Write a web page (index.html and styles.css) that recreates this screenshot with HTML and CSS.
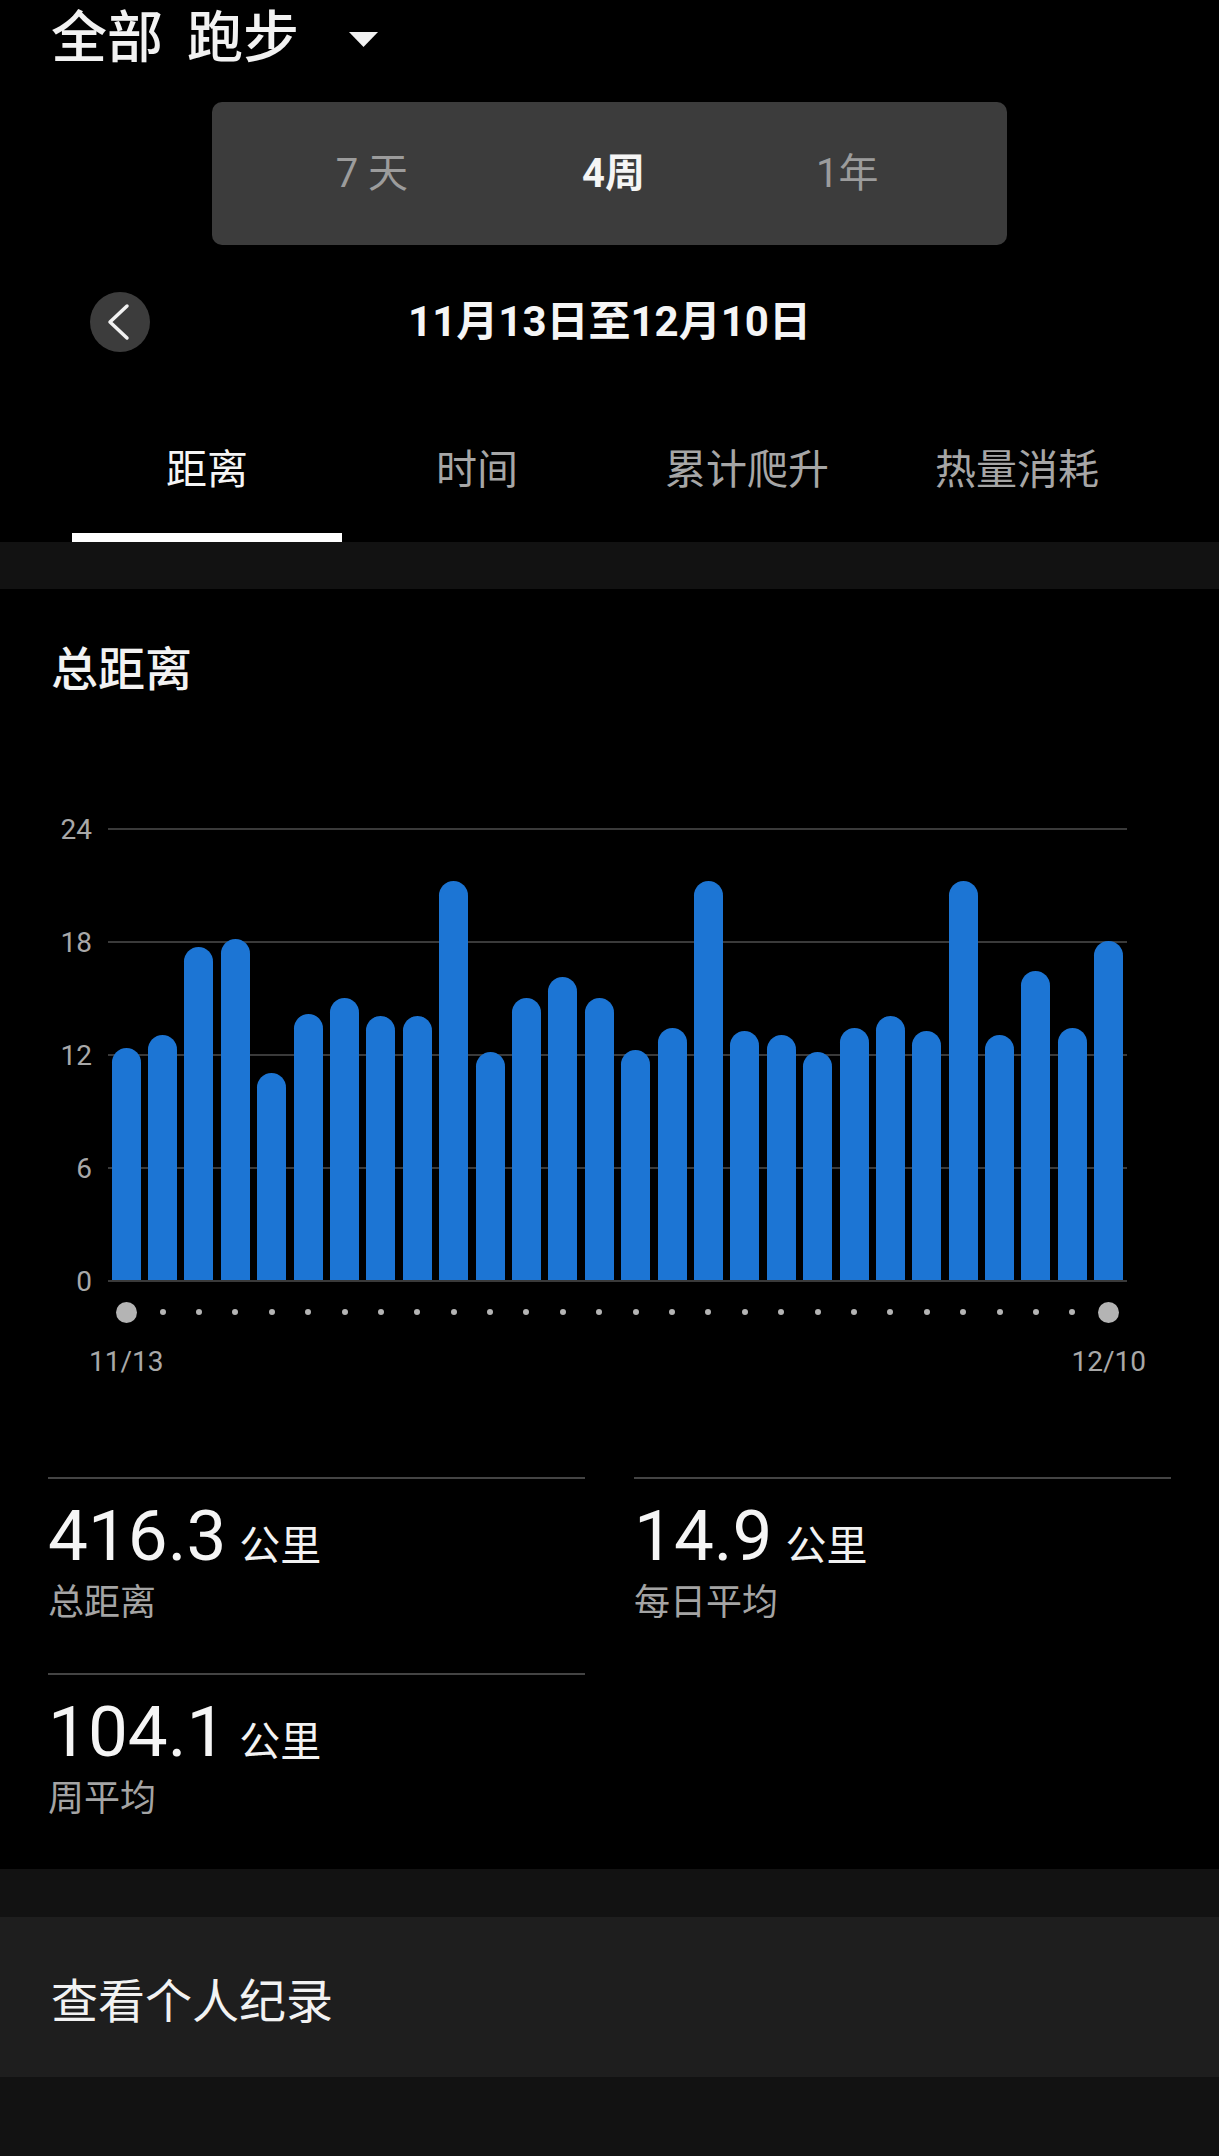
FILE: index.html
```html
<!DOCTYPE html>
<html lang="zh-CN">
<head>
<meta charset="utf-8">
<title>全部 跑步</title>
<link rel="stylesheet" href="styles.css">
</head>
<body>
<div class="page">
  <header class="title-row">
    <span class="title">全部 跑步</span>
    <svg class="caret" width="29" height="15" viewBox="0 0 29 15"><polygon points="0,0 29,0 14.5,15" fill="#f2f2f2"/></svg>
  </header>

  <div class="segment">
    <div class="seg-item">7 天</div>
    <div class="seg-item active">4周</div>
    <div class="seg-item">1年</div>
  </div>

  <div class="date-row">
    <div class="date-left">
      <div class="back">
        <svg width="60" height="60" viewBox="0 0 60 60"><polyline points="37,14 20,30 37,46" fill="none" stroke="#f2f2f2" stroke-width="3.5" stroke-linecap="round" stroke-linejoin="round"/></svg>
      </div>
    </div>
    <div class="date-text">11月13日至12月10日</div>
    <div></div>
  </div>

  <nav class="tabs">
    <div class="tab active">距离</div>
    <div class="tab">时间</div>
    <div class="tab">累计爬升</div>
    <div class="tab">热量消耗</div>
  </nav>

  <div class="band"></div>

  <section class="card">
    <h2 class="card-title">总距离</h2>
    <div class="chart">
      <div class="yaxis">
        <span>24</span><span>18</span><span>12</span><span>6</span><span>0</span>
      </div>
      <div class="plot">
        <div class="bars">
          <div class="slot"><div class="bar" style="height:51.25%"></div></div>
          <div class="slot"><div class="bar" style="height:54.17%"></div></div>
          <div class="slot"><div class="bar" style="height:73.75%"></div></div>
          <div class="slot"><div class="bar" style="height:75.42%"></div></div>
          <div class="slot"><div class="bar" style="height:45.83%"></div></div>
          <div class="slot"><div class="bar" style="height:58.75%"></div></div>
          <div class="slot"><div class="bar" style="height:62.5%"></div></div>
          <div class="slot"><div class="bar" style="height:58.33%"></div></div>
          <div class="slot"><div class="bar" style="height:58.33%"></div></div>
          <div class="slot"><div class="bar" style="height:88.33%"></div></div>
          <div class="slot"><div class="bar" style="height:50.42%"></div></div>
          <div class="slot"><div class="bar" style="height:62.5%"></div></div>
          <div class="slot"><div class="bar" style="height:67.08%"></div></div>
          <div class="slot"><div class="bar" style="height:62.5%"></div></div>
          <div class="slot"><div class="bar" style="height:50.83%"></div></div>
          <div class="slot"><div class="bar" style="height:55.83%"></div></div>
          <div class="slot"><div class="bar" style="height:88.33%"></div></div>
          <div class="slot"><div class="bar" style="height:55%"></div></div>
          <div class="slot"><div class="bar" style="height:54.17%"></div></div>
          <div class="slot"><div class="bar" style="height:50.42%"></div></div>
          <div class="slot"><div class="bar" style="height:55.83%"></div></div>
          <div class="slot"><div class="bar" style="height:58.33%"></div></div>
          <div class="slot"><div class="bar" style="height:55%"></div></div>
          <div class="slot"><div class="bar" style="height:88.33%"></div></div>
          <div class="slot"><div class="bar" style="height:54.17%"></div></div>
          <div class="slot"><div class="bar" style="height:68.33%"></div></div>
          <div class="slot"><div class="bar" style="height:55.83%"></div></div>
          <div class="slot"><div class="bar" style="height:75%"></div></div>
        </div>
      </div>
      <div class="dots">
        <div class="dslot"><span class="dot big"></span></div>
        <div class="dslot"><span class="dot"></span></div>
        <div class="dslot"><span class="dot"></span></div>
        <div class="dslot"><span class="dot"></span></div>
        <div class="dslot"><span class="dot"></span></div>
        <div class="dslot"><span class="dot"></span></div>
        <div class="dslot"><span class="dot"></span></div>
        <div class="dslot"><span class="dot"></span></div>
        <div class="dslot"><span class="dot"></span></div>
        <div class="dslot"><span class="dot"></span></div>
        <div class="dslot"><span class="dot"></span></div>
        <div class="dslot"><span class="dot"></span></div>
        <div class="dslot"><span class="dot"></span></div>
        <div class="dslot"><span class="dot"></span></div>
        <div class="dslot"><span class="dot"></span></div>
        <div class="dslot"><span class="dot"></span></div>
        <div class="dslot"><span class="dot"></span></div>
        <div class="dslot"><span class="dot"></span></div>
        <div class="dslot"><span class="dot"></span></div>
        <div class="dslot"><span class="dot"></span></div>
        <div class="dslot"><span class="dot"></span></div>
        <div class="dslot"><span class="dot"></span></div>
        <div class="dslot"><span class="dot"></span></div>
        <div class="dslot"><span class="dot"></span></div>
        <div class="dslot"><span class="dot"></span></div>
        <div class="dslot"><span class="dot"></span></div>
        <div class="dslot"><span class="dot"></span></div>
        <div class="dslot"><span class="dot big"></span></div>
      </div>
      <div class="xlabels">
        <div class="lslot"><span>11/13</span></div>
        <div class="lslot-fill"></div>
        <div class="lslot"><span>12/10</span></div>
      </div>
    </div>

    <div class="stats">
      <div class="stat">
        <div class="stat-value"><span class="num">416.3</span><span class="unit">公里</span></div>
        <div class="stat-label">总距离</div>
      </div>
      <div class="stat">
        <div class="stat-value"><span class="num">14.9</span><span class="unit">公里</span></div>
        <div class="stat-label">每日平均</div>
      </div>
      <div class="stat">
        <div class="stat-value"><span class="num">104.1</span><span class="unit">公里</span></div>
        <div class="stat-label">周平均</div>
      </div>
    </div>
  </section>

  <div class="band band-lg"></div>

  <div class="records">查看个人纪录</div>

  <div class="bottom-fill"></div>
</div>
</body>
</html>
```

FILE: styles.css
```css
html, body {
  margin: 0;
  padding: 0;
  background: #000;
}

body {
  font-family: "Roboto", "Noto Sans CJK SC", sans-serif;
  color: #f2f2f2;
}

.page {
  width: 1219px;
  min-height: 2156px;
  display: flex;
  flex-direction: column;
  background: #000;
}

/* Title */
.title-row {
  height: 72px;
  display: flex;
  align-items: center;
  padding-left: 51px;
}

.title {
  margin-top: 4px;
  font-size: 56px;
  line-height: 72px;
  font-weight: 500;
  word-spacing: 10px;
  white-space: nowrap;
  color: #f2f2f2;
}

.caret {
  margin-left: 50px;
  margin-top: 6px;
}

/* Segment control */
.segment {
  width: 795px;
  height: 143px;
  margin: 30px auto 0;
  box-sizing: border-box;
  padding: 0 41px;
  background: #3c3c3c;
  border-radius: 10px;
  display: grid;
  grid-template-columns: repeat(3, 1fr);
  align-items: center;
}

.seg-item {
  text-align: center;
  font-size: 40px;
  line-height: 46px;
  color: #9c9c9c;
}

.seg-item.active {
  color: #f5f5f5;
  font-weight: 700;
  padding-left: 8px;
}

/* Date row */
.date-row {
  margin-top: 47px;
  height: 60px;
  display: grid;
  grid-template-columns: 1fr auto 1fr;
  align-items: center;
}

.date-left {
  display: flex;
  padding-left: 90px;
}

.back {
  width: 60px;
  height: 60px;
  border-radius: 50%;
  background: #3c3c3c;
}

.back svg {
  display: block;
}

.date-text {
  font-size: 42px;
  line-height: 60px;
  font-weight: 700;
  color: #f5f5f5;
}

/* Tabs */
.tabs {
  margin-top: 48px;
  padding-left: 72px;
  display: flex;
}

.tab {
  width: 270px;
  box-sizing: border-box;
  padding-top: 50px;
  padding-bottom: 43px;
  border-bottom: 9px solid transparent;
  text-align: center;
  font-size: 41px;
  line-height: 40px;
  color: #a6a6a6;
}

.tab.active {
  color: #f5f5f5;
  border-bottom-color: #ffffff;
}

.band {
  height: 47px;
  background: #121212;
}

.band-lg {
  height: 48px;
}

/* Card */
.card {
  padding: 58px 48px 0 51px;
  background: #000;
}

.card-title {
  margin: 0;
  font-size: 47px;
  line-height: 46px;
  font-weight: 500;
  color: #f2f2f2;
}

.chart {
  margin-top: 135px;
  display: grid;
  grid-template-columns: 41px 1019px;
  column-gap: 16px;
}

.yaxis {
  height: 454px;
  display: flex;
  flex-direction: column;
  justify-content: space-between;
}

.yaxis span {
  height: 2px;
  display: flex;
  align-items: center;
  justify-content: flex-end;
  font-size: 28px;
  color: #a8a8a8;
}

.plot {
  height: 454px;
  background: repeating-linear-gradient(to bottom, #3a3a3a 0, #3a3a3a 2px, transparent 2px, transparent 113px);
}

.bars {
  height: 452px;
  display: flex;
  align-items: flex-end;
}

.slot {
  flex: 1;
  height: 100%;
  display: flex;
  align-items: flex-end;
  justify-content: center;
}

.bar {
  width: 29px;
  background: #1c75d4;
  border-radius: 14.5px 14.5px 0 0;
}

.dots {
  grid-column: 2;
  height: 60px;
  display: flex;
  align-items: center;
}

.dslot {
  flex: 1;
  display: flex;
  justify-content: center;
  align-items: center;
}

.dot {
  width: 6px;
  height: 6px;
  border-radius: 50%;
  background: #b4b4b4;
}

.dot.big {
  width: 21px;
  height: 21px;
}

.xlabels {
  grid-column: 2;
  display: flex;
  height: 40px;
}

.lslot {
  width: 36.39px;
  display: flex;
  justify-content: center;
}

.lslot-fill {
  flex: 1;
}

.lslot span {
  white-space: nowrap;
  font-size: 28px;
  line-height: 40px;
  color: #a8a8a8;
}

/* Stats */
.stats {
  margin-top: 95px;
  margin-left: -3px;
  display: grid;
  grid-template-columns: 537px 537px;
  column-gap: 49px;
}

.stat {
  border-top: 2px solid #444;
  padding-top: 22px;
  padding-bottom: 50px;
}

.stat-value {
  height: 70px;
  display: flex;
  align-items: baseline;
}

.num {
  font-size: 71px;
  line-height: 70px;
  color: #f5f5f5;
}

.unit {
  margin-left: 13px;
  font-size: 41px;
  color: #f2f2f2;
}

.stat-label {
  margin-top: 12px;
  font-size: 36px;
  line-height: 40px;
  color: #a4a4a4;
}

/* Records */
.records {
  height: 160px;
  display: flex;
  align-items: center;
  padding-left: 51px;
  background: #1e1e1e;
  font-size: 47px;
  color: #f2f2f2;
}

.bottom-fill {
  flex: 1;
  background: #121212;
}
```
